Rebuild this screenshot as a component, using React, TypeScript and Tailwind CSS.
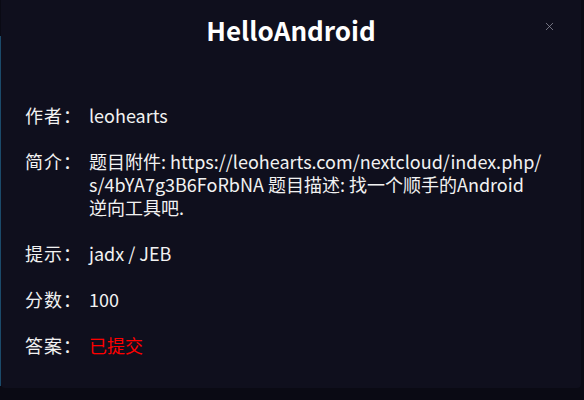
import { X } from "lucide-react";

const rows: { label: string; value: React.ReactNode; red?: boolean }[] = [
  { label: "作者：", value: "leohearts" },
  {
    label: "简介：",
    value: (
      <>
        题目附件: https://leohearts.com/nextcloud/index.php/
        <wbr />
        s/4bYA7g3B6FoRbNA 题目描述: 找一个顺手的Android
        <br />
        逆向工具吧.
      </>
    ),
  },
  { label: "提示：", value: "jadx / JEB" },
  { label: "分数：", value: "100" },
  { label: "答案：", value: "已提交", red: true },
];

export default function App() {
  return (
    <div
      className="relative h-[400px] w-full overflow-hidden bg-[#0a0a14]"
      style={{ fontFamily: '"Noto Sans CJK SC", "Noto Sans", sans-serif' }}
    >
      {/* card behind the overlay */}
      <div className="absolute left-[-200px] top-[36px] h-[350px] w-[201px] border-r border-[#1b4a6a]" />

      <div className="absolute left-[1px] top-0 flex h-[388px] w-[580px] flex-col rounded-b bg-[#0f0f1d]">
        <div className="relative flex h-[60px] items-center justify-center">
          <h2 className="text-[26px] font-bold leading-none text-white">HelloAndroid</h2>
          <button className="absolute right-[25px] top-[20px] text-[#9a9aa8]">
            <X size={13} strokeWidth={1.3} />
          </button>
        </div>

        <div className="flex flex-col gap-[23px] px-6 pt-[44px]">
          {rows.map((r) => (
            <div key={r.label} className="flex text-[18px] leading-[23px] text-[#f2f2f2]">
              <span className="w-16 shrink-0 tracking-[1px]">{r.label}</span>
              <span className={r.red ? "text-[#ff0000]" : ""}>{r.value}</span>
            </div>
          ))}
        </div>
      </div>
    </div>
  );
}
